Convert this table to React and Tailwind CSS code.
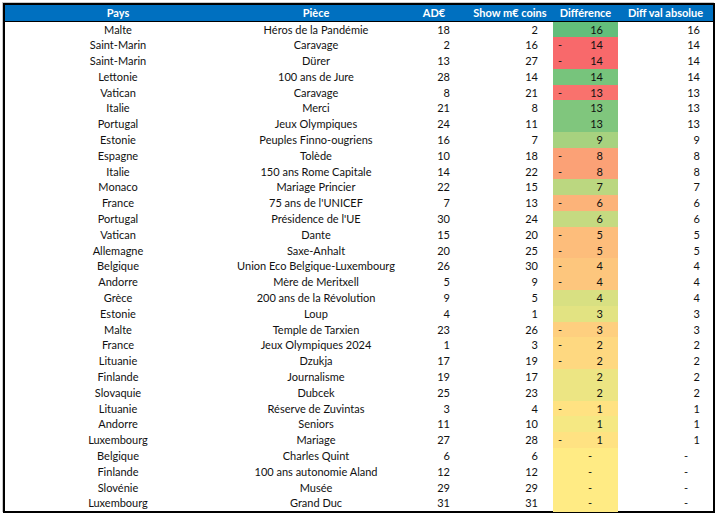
import React from "react";

const rows = [
  ["Malte", "Héros de la Pandémie", 18, 2],
  ["Saint-Marin", "Caravage", 2, 16],
  ["Saint-Marin", "Dürer", 13, 27],
  ["Lettonie", "100 ans de Jure", 28, 14],
  ["Vatican", "Caravage", 8, 21],
  ["Italie", "Merci", 21, 8],
  ["Portugal", "Jeux Olympiques", 24, 11],
  ["Estonie", "Peuples Finno-ougriens", 16, 7],
  ["Espagne", "Tolède", 10, 18],
  ["Italie", "150 ans Rome Capitale", 14, 22],
  ["Monaco", "Mariage Princier", 22, 15],
  ["France", "75 ans de l'UNICEF", 7, 13],
  ["Portugal", "Présidence de l'UE", 30, 24],
  ["Vatican", "Dante", 15, 20],
  ["Allemagne", "Saxe-Anhalt", 20, 25],
  ["Belgique", "Union Eco Belgique-Luxembourg", 26, 30],
  ["Andorre", "Mère de Meritxell", 5, 9],
  ["Grèce", "200 ans de la Révolution", 9, 5],
  ["Estonie", "Loup", 4, 1],
  ["Malte", "Temple de Tarxien", 23, 26],
  ["France", "Jeux Olympiques 2024", 1, 3],
  ["Lituanie", "Dzukja", 17, 19],
  ["Finlande", "Journalisme", 19, 17],
  ["Slovaquie", "Dubcek", 25, 23],
  ["Lituanie", "Réserve de Zuvintas", 3, 4],
  ["Andorre", "Seniors", 11, 10],
  ["Luxembourg", "Mariage", 27, 28],
  ["Belgique", "Charles Quint", 6, 6],
  ["Finlande", "100 ans autonomie Aland", 12, 12],
  ["Slovénie", "Musée", 29, 29],
  ["Luxembourg", "Grand Duc", 31, 31],
];

// 3-colour scale: red (min) -> yellow (0) -> green (max)
const red = [248, 105, 107];
const yellow = [255, 235, 132];
const green = [99, 190, 123];

function scale(v) {
  const to = v < 0 ? red : green;
  const t = v < 0 ? -v / 14 : v / 16;
  const c = yellow.map((y, i) => Math.round(y + (to[i] - y) * t));
  return `rgb(${c[0]}, ${c[1]}, ${c[2]})`;
}

const cols = "grid grid-cols-[226px_170px_66px_86px_65px_95px]";

export default function App() {
  return (
    <div className="w-[720px] h-[520px] bg-white pt-[3px] pl-[3px] font-['Lato',sans-serif] text-[11px] text-[#111]">
      <div className="w-[712px] border-2 border-black shadow-[-1px_-1px_0_#c8c8c8]">
        <div className={`${cols} h-[16.5px] bg-[#0070c0] border-b border-black text-white font-bold leading-[15px]`}>
          <div className="text-center">Pays</div>
          <div className="text-center">Pièce</div>
          <div className="text-center">AD€</div>
          <div className="text-center">Show m€ coins</div>
          <div className="text-center">Différence</div>
          <div className="text-center">Diff val absolue</div>
        </div>
        {rows.map(([pays, piece, ad, show], idx) => {
          const d = ad - show;
          return (
            <div key={idx} className={`${cols} h-[15.8px] leading-[16.4px]`}>
              <div className="text-center">{pays}</div>
              <div className="text-center">{piece}</div>
              <div className="text-right pr-[17px]">{ad}</div>
              <div className="text-right pr-[15px]">{show}</div>
              <div
                className={`relative text-right ${d === 0 ? "pr-[26px]" : "pr-[15px]"}`}
                style={{ backgroundColor: scale(d) }}
              >
                {d < 0 && <span className="absolute left-[5px]">-</span>}
                {d === 0 ? "-" : Math.abs(d)}
              </div>
              <div className={`text-right ${d === 0 ? "pr-[25px]" : "pr-[13px]"}`}>
                {d === 0 ? "-" : Math.abs(d)}
              </div>
            </div>
          );
        })}
      </div>
    </div>
  );
}
